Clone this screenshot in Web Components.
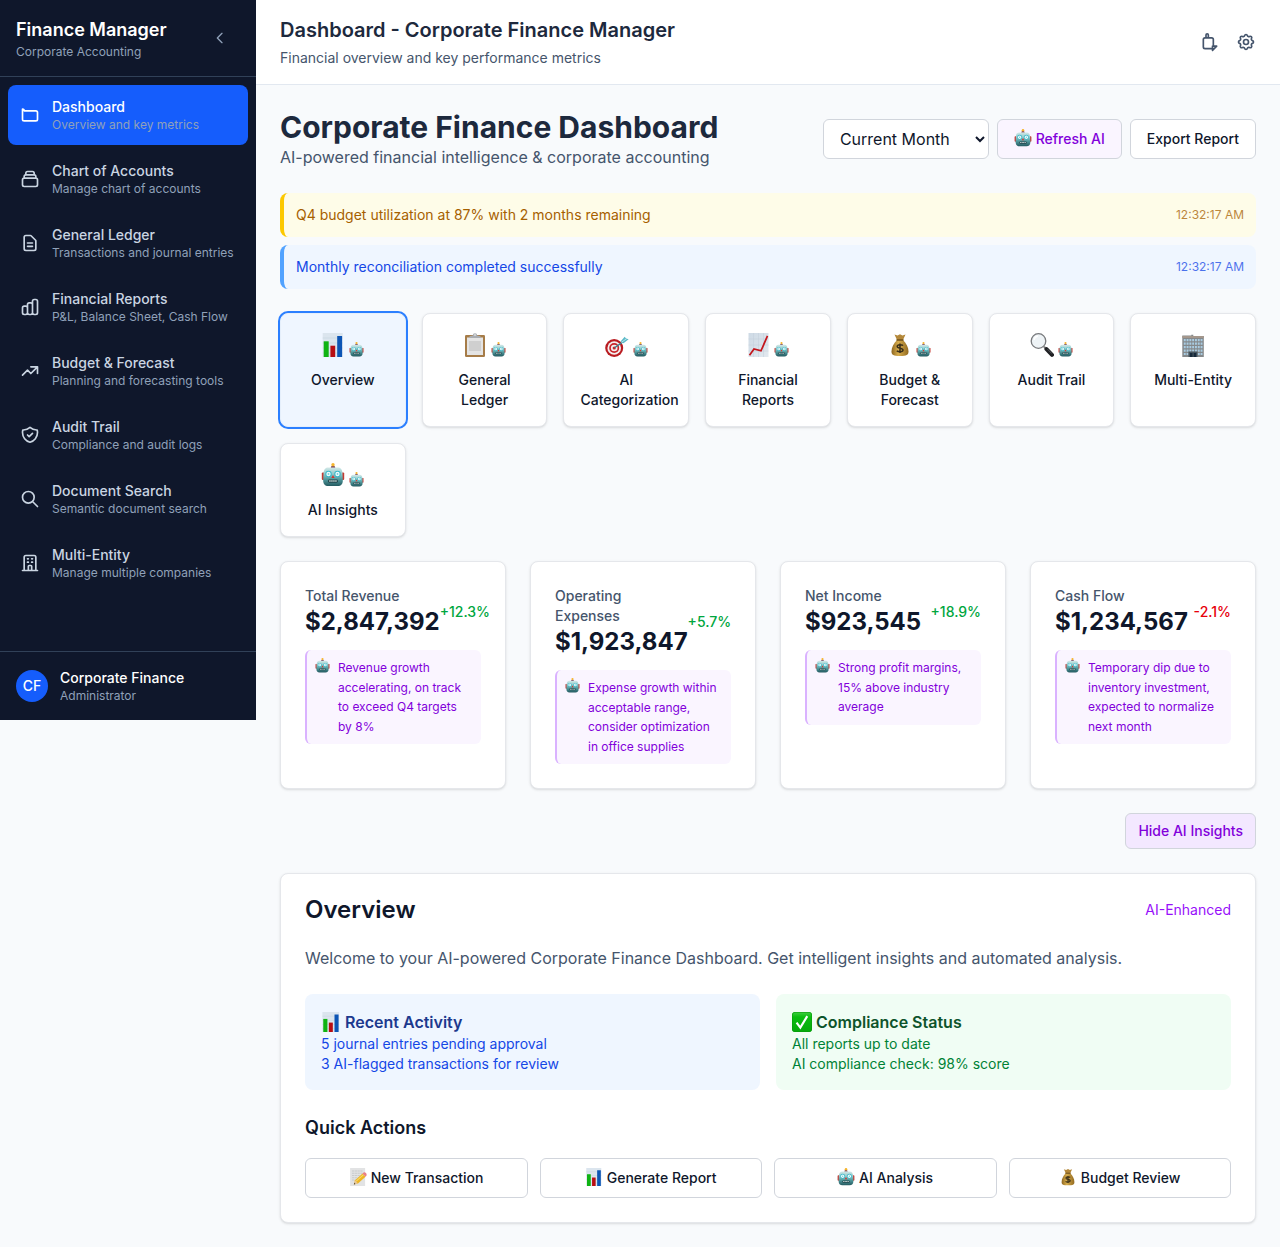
<!DOCTYPE html>
<html lang="en">
<head>
<meta charset="utf-8">
<meta name="viewport" content="width=device-width, initial-scale=1">
<title>Dashboard - Corporate Finance Manager</title>
<style>
  body {
    margin: 0;
    background: #f8fafc;
    color: #0f172b;
    font: 400 14px/20px Inter, "Noto Sans", sans-serif;
  }
</style>
</head>
<body>
<finance-app></finance-app>

<script>
const define = (name, html, setup) => {
  const template = document.createElement('template');
  template.innerHTML = html;
  customElements.define(name, class extends HTMLElement {
    constructor() {
      super();
      this.attachShadow({ mode: 'open' }).append(template.content.cloneNode(true));
    }
    connectedCallback() {
      if (setup) setup(this, this.shadowRoot);
    }
  });
};

const ICONS = {
  folder: 'M3 7v10a2 2 0 002 2h14a2 2 0 002-2V9a2 2 0 00-2-2H5a2 2 0 00-2-2z',
  collection: 'M19 11H5m14 0a2 2 0 012 2v6a2 2 0 01-2 2H5a2 2 0 01-2-2v-6a2 2 0 012-2m14 0V9a2 2 0 00-2-2M5 11V9a2 2 0 012-2m0 0V5a2 2 0 012-2h6a2 2 0 012 2v2M7 7h10',
  document: 'M9 12h6m-6 4h6m2 5H7a2 2 0 01-2-2V5a2 2 0 012-2h5.586a1 1 0 01.707.293l5.414 5.414a1 1 0 01.293.707V19a2 2 0 01-2 2z',
  bars: 'M9 19v-6a2 2 0 00-2-2H5a2 2 0 00-2 2v6a2 2 0 002 2h2a2 2 0 002-2zm0 0V9a2 2 0 012-2h2a2 2 0 012 2v10m-6 0a2 2 0 002 2h2a2 2 0 002-2m0 0V5a2 2 0 012-2h2a2 2 0 012 2v14a2 2 0 01-2 2h-2a2 2 0 01-2-2z',
  trend: 'M13 7h8m0 0v8m0-8l-8 8-4-4-6 6',
  shield: 'M9 12l2 2 4-4m5.618-4.016A11.955 11.955 0 0112 2.944a11.955 11.955 0 01-8.618 3.04A12.02 12.02 0 003 9c0 5.591 3.824 10.29 9 11.622 5.176-1.332 9-6.03 9-11.622 0-1.042-.133-2.052-.382-3.016z',
  search: 'M21 21l-6-6m2-5a7 7 0 11-14 0 7 7 0 0114 0z',
  building: 'M19 21V5a2 2 0 00-2-2H7a2 2 0 00-2 2v16m14 0h2m-2 0h-5m-9 0H3m2 0h5M9 7h1m-1 4h1m4-4h1m-1 4h1m-5 10v-5a1 1 0 011-1h2a1 1 0 011 1v5m-4 0h4',
  back: 'M15 19l-7-7 7-7',
  notify: 'M15 17h5l-5 5v-5zM14 20H6a2 2 0 01-2-2V9a2 2 0 012-2h8a2 2 0 012 2v8M7.2 7V3.500a1.400 1.400 0 012.800 0V7',
  cog: 'M10.325 4.317c.426-1.756 2.924-1.756 3.35 0a1.724 1.724 0 002.573 1.066c1.543-.94 3.31.826 2.37 2.37a1.724 1.724 0 001.065 2.572c1.756.426 1.756 2.924 0 3.35a1.724 1.724 0 00-1.066 2.573c.94 1.543-.826 3.31-2.37 2.37a1.724 1.724 0 00-2.572 1.065c-.426 1.756-2.924 1.756-3.35 0a1.724 1.724 0 00-2.573-1.066c-1.543.94-3.31-.826-2.37-2.37a1.724 1.724 0 00-1.065-2.572c-1.756-.426-1.756-2.924 0-3.35a1.724 1.724 0 001.066-2.573c-.94-1.543.826-3.31 2.37-2.37.996.608 2.296.07 2.572-1.065zM15 12a3 3 0 11-6 0 3 3 0 016 0z'
};

define('ui-icon', `
<style>
  :host { display: block; flex: none; width: 20px; height: 20px; }
  :host([small]) { width: 16px; height: 16px; }
  svg { display: block; width: 100%; height: 100%; }
</style>
<svg viewBox="0 0 24 24" fill="none" stroke="currentColor" stroke-width="2" stroke-linecap="round" stroke-linejoin="round" aria-hidden="true"><path/></svg>
`, (host, root) => root.querySelector('path').setAttribute('d', ICONS[host.getAttribute('name')]));

// Full-colour pictograms, each on a 24 by 24 grid.
const PICTURES = {
  robot: `
    <defs><linearGradient id="g" x1="0" y1="0" x2="0" y2="1"><stop offset="0" stop-color="#d3e9e8"/><stop offset=".35" stop-color="#8fc9cb"/><stop offset=".65" stop-color="#4f979b"/><stop offset="1" stop-color="#245a60"/></linearGradient></defs>
    <rect x=".8" y="9.500" width="3" height="7.500" rx="1" fill="#c33a32"/><rect x="20.200" y="9.500" width="3" height="7.500" rx="1" fill="#c33a32"/>
    <path d="M9.800 5c0-1.500.8-2.300 2.200-2.300s2.200.8 2.200 2.300z" fill="#6d3a55"/><circle cx="12" cy="1.700" r="1.700" fill="#f5b52e"/>
    <path d="M7 4.500h10c3 0 4.300 2.500 4.500 6l.3 7c.1 3.500-1.800 5.500-5 5.500H7.200c-3.200 0-5.100-2-5-5.500l.3-7c.2-3.500 1.500-6 4.500-6z" fill="url(#g)"/>
    <circle cx="7.500" cy="11" r="3.200" fill="#39b8c9"/><circle cx="16.500" cy="11" r="3.200" fill="#39b8c9"/>
    <circle cx="7.500" cy="11" r="2.200" fill="#eefcfd"/><circle cx="16.500" cy="11" r="2.200" fill="#eefcfd"/>
    <circle cx="7.500" cy="11" r=".9" fill="#7ccbd4"/><circle cx="16.500" cy="11" r=".9" fill="#7ccbd4"/>
    <path d="M12 12l1.600 2.900h-3.200z" fill="#d8322c"/>
    <rect x="7" y="16.500" width="10" height="3.200" rx="1.400" fill="#24474c"/><path d="M8.300 18h7.600" stroke="#d5e4e3" stroke-width="1.600" stroke-dasharray="1.300 .7"/>`,
  bars: `
    <path d="M1.700 0h20v24h-20z" fill="#dbe5ee"/><path d="M1.700 5h20M1.700 10h20M1.700 15h20M1.700 20h20" stroke="#c6d3df" stroke-width=".6"/>
    <path d="M2.700 8.300h5V24h-5z" fill="#0fb313"/><path d="M9.400 12.700h4.800V24H9.400z" fill="#b80d12"/><path d="M16.200 3h4.900v21h-4.900z" fill="#0c55b5"/>`,
  clipboard: `
    <rect x="2" y="2" width="20" height="22" rx="1.200" fill="#a67c48"/><path d="M4 4.500h16V22H4z" fill="#e4e4e4"/><path d="M6 8h12v10H6z" fill="#cfcfcf"/>
    <path d="M6.500 5V3.300l3.300-.8a2.200 2.200 0 014.400 0l3.300.8V5z" fill="#a9adb1"/><circle cx="12" cy="2" r=".8" fill="#f8fafc"/>`,
  target: `
    <circle cx="9.200" cy="15" r="9" fill="#b91b20"/><circle cx="9.200" cy="15" r="6.800" fill="#f4efef"/><circle cx="9.200" cy="15" r="5" fill="#c8252a"/><circle cx="9.200" cy="15" r="3.300" fill="#f4efef"/><circle cx="9.200" cy="15" r="1.600" fill="#c8252a"/>
    <path d="M9.500 14.800l8-5.600" stroke="#397f8b" stroke-width="1.400"/><path d="M15.500 8.500l4.200-4.800 1.300 1.800 2.700.8-5.200 4z" fill="#5cbac8"/><path d="M16.500 9.300l5.600-4" stroke="#b8e4e8"/>`,
  chart: `
    <defs><linearGradient id="g" x1="0" y1="0" x2="1" y2="1"><stop offset="0" stop-color="#cedae5"/><stop offset="1" stop-color="#e2e9ef"/></linearGradient></defs>
    <path d="M2.500 0h20v24h-20z" fill="url(#g)"/><path d="M2.500 6h20M2.500 12h20M2.500 18h20M7.500 0v24M12.500 0v24M17.500 0v24" stroke="#c2cfdb" stroke-width=".5"/>
    <path d="M3.500 22.200l4.500-6.200 7 1.800 6.500-15" fill="none" stroke="#c4161c" stroke-width="1.700"/>`,
  money: `
    <defs><linearGradient id="g"><stop offset="0" stop-color="#8e661f"/><stop offset=".4" stop-color="#d7ad4d"/><stop offset="1" stop-color="#936a20"/></linearGradient></defs>
    <path d="M6.500 1.500l3 1 2.500-1.300 2.500 1.300 3-1L15 7H9z" fill="#b4883a"/>
    <path d="M9 7h6c3 3 5.500 7 5.500 11.500 0 3.500-2 4.500-8.500 4.500s-8.500-1-8.500-4.500C3.500 14 6 10 9 7z" fill="url(#g)"/><path d="M8.500 7h7" stroke="#725019" stroke-width="1.500"/>
    <path d="M15 12.600c-.8-1-5.800-1.500-5.800.8 0 2.400 5.800 1.200 5.800 3.700 0 2.300-5 2-6.200.6M12 10.500v9.500" fill="none" stroke="#382d18" stroke-width="1.500"/>`,
  lens: `
    <path d="M14 13.700l3 3" stroke="#777" stroke-width="2"/><path d="M16.500 16.200l5.500 5.600" stroke="#202124" stroke-width="4" stroke-linecap="round"/><path d="M17.500 16.200l4.300 4.300" stroke="#65686c" stroke-width=".8"/>
    <circle cx="8.500" cy="8" r="7.300" fill="#eef3f6" stroke="#77797c" stroke-width="1.300"/><path d="M4 7a5 5 0 014-4" fill="none" stroke="#fff" stroke-width="1.300"/>`,
  office: `
    <path d="M1.300 2.500h9v-.7h2V3h10.500v21H1.300z" fill="#85898b"/><path d="M1.300 3h21.500v2H1.300z" fill="#a4978c"/>
    <path d="M2.800 7.200h18.800M2.800 10.700h18.800M2.800 14.200h18.800M2.800 17.700h18.800M2.800 21h4.600M16.800 21h4.800" stroke="#a9cce2" stroke-width="2.200" stroke-dasharray="1.900 .9"/>
    <path d="M7.500 18.500h9V24h-9z" fill="#45545e"/><path d="M9 20h2.500v4H9zM12.700 20h2.500v4h-2.500z" fill="#172a3b"/>`,
  check: `
    <defs><linearGradient id="g" x1="0" y1="0" x2="0" y2="1"><stop offset="0" stop-color="#42cf42"/><stop offset=".25" stop-color="#0bbd10"/><stop offset="1" stop-color="#06a90c"/></linearGradient></defs>
    <rect width="24" height="24" rx="3.500" fill="url(#g)"/><rect x=".4" y=".4" width="23.200" height="23.200" rx="3.200" fill="none" stroke="#079a0c" stroke-width=".8"/>
    <path d="M5.500 12.800l4.500 6L18.300 5" fill="none" stroke="#fff" stroke-width="2.600"/>`,
  memo: `
    <path d="M1.500 0h20v24h-20z" fill="#e2e3e4"/><path d="M4 4h14M4 7h14M4 10h11M4 13h8M4 16h6" stroke="#b9bcbe" stroke-width=".8" stroke-dasharray="3 .7"/>
    <path d="M6.500 22l1.600-5.700L18 7.300l4 4.200-10 9z" fill="#edb524"/><path d="M9.600 17.600L19.500 8.900" stroke="#f9da65" stroke-width="1.500"/><path d="M18 7.300l1.500-1.400c2-1.200 5 2 3.700 4.300L22 11.500z" fill="#e98085"/><path d="M6.500 22l1.600-5.700 3.900 4.200z" fill="#e6c79a"/><path d="M6.500 22l.6-2.200 1.500 1.600z" fill="#3b3732"/>`
};

define('ui-picture', `
<style>
  :host { display: inline-block; flex: none; width: 18px; height: 18px; vertical-align: -3px; }
  :host([size="small"]) { width: 15px; height: 15px; }
  :host([size="title"]) { width: 20px; height: 20px; vertical-align: -4px; }
  :host([size="large"]) { width: 24px; height: 24px; }
  svg { display: block; width: 100%; height: 100%; }
</style>
<svg viewBox="0 0 24 24" aria-hidden="true"></svg>
`, (host, root) => { root.querySelector('svg').innerHTML = PICTURES[host.getAttribute('name')]; });

define('nav-item', `
<style>
  :host { display: block; }
  a { display: flex; align-items: center; gap: 12px; padding: 12px; border-radius: 8px; color: #cad5e2; text-decoration: none; }
  :host([active]) a { background: #155dfc; color: #fff; }
  .name { display: block; font-weight: 500; }
  .note { display: block; font-size: 12px; line-height: 16px; color: #90a1b9; }
</style>
<a href="#"><slot name="icon"></slot><span><span class="name"><slot></slot></span><span class="note"><slot name="note"></slot></span></span></a>
`, (host, root) => {
  if (host.hasAttribute('active')) root.querySelector('a').setAttribute('aria-current', 'page');
});

define('app-sidebar', `
<style>
  :host { display: flex; flex-direction: column; flex: none; align-self: flex-start; box-sizing: border-box; width: 256px; min-height: 720px; background: #0f172b; color: #fff; }
  header { display: flex; align-items: center; justify-content: space-between; padding: 16px; border-bottom: 1px solid #314158; }
  h2 { margin: 0; font-size: 18px; line-height: 28px; font-weight: 600; }
  p { margin: 0; font-size: 12px; line-height: 16px; color: #90a1b9; }
  button { padding: 12px; border: 0; border-radius: 6px; background: none; color: #90a1b9; }
  nav { display: flex; flex: 1; flex-direction: column; gap: 4px; padding: 8px; }
  footer { display: flex; align-items: center; gap: 12px; padding: 16px; border-top: 1px solid #314158; }
  .avatar { display: grid; place-items: center; width: 32px; height: 32px; border-radius: 50%; background: #155dfc; font-weight: 500; }
  .user { font-weight: 500; }
</style>
<header>
  <div><h2>Finance Manager</h2><p>Corporate Accounting</p></div>
  <button type="button" aria-label="Collapse sidebar"><ui-icon name="back" small></ui-icon></button>
</header>
<nav aria-label="Main">
  <nav-item active><ui-icon slot="icon" name="folder"></ui-icon>Dashboard<span slot="note">Overview and key metrics</span></nav-item>
  <nav-item><ui-icon slot="icon" name="collection"></ui-icon>Chart of Accounts<span slot="note">Manage chart of accounts</span></nav-item>
  <nav-item><ui-icon slot="icon" name="document"></ui-icon>General Ledger<span slot="note">Transactions and journal entries</span></nav-item>
  <nav-item><ui-icon slot="icon" name="bars"></ui-icon>Financial Reports<span slot="note">P&amp;L, Balance Sheet, Cash Flow</span></nav-item>
  <nav-item><ui-icon slot="icon" name="trend"></ui-icon>Budget &amp; Forecast<span slot="note">Planning and forecasting tools</span></nav-item>
  <nav-item><ui-icon slot="icon" name="shield"></ui-icon>Audit Trail<span slot="note">Compliance and audit logs</span></nav-item>
  <nav-item><ui-icon slot="icon" name="search"></ui-icon>Document Search<span slot="note">Semantic document search</span></nav-item>
  <nav-item><ui-icon slot="icon" name="building"></ui-icon>Multi-Entity<span slot="note">Manage multiple companies</span></nav-item>
</nav>
<footer>
  <div class="avatar">CF</div>
  <div><div class="user">Corporate Finance</div><p>Administrator</p></div>
</footer>
`);

define('app-header', `
<style>
  :host { display: flex; align-items: center; justify-content: space-between; padding: 16px 24px; background: #fff; border-bottom: 1px solid #e2e8f0; }
  h1 { margin: 0 0 4px; font-size: 20px; line-height: 28px; font-weight: 600; color: #1d293d; }
  p { margin: 0; color: #45556c; }
  .tools { display: flex; gap: 16px; color: #45556c; }
  button { padding: 0; border: 0; background: none; color: inherit; }
</style>
<div><h1>Dashboard - Corporate Finance Manager</h1><p>Financial overview and key performance metrics</p></div>
<div class="tools">
  <button type="button" aria-label="Notifications"><ui-icon name="notify"></ui-icon></button>
  <button type="button" aria-label="Settings"><ui-icon name="cog"></ui-icon></button>
</div>
`);

define('ui-button', `
<style>
  :host { display: block; }
  button { display: block; box-sizing: border-box; width: 100%; padding: 9px 16px; border: 1px solid #d1d5dc; border-radius: 6px; background: #fff; color: #0f172b; font: inherit; font-weight: 500; text-align: center; white-space: nowrap; }
  :host([tone="ai"]) button { background: #faf5ff; color: #8200db; }
  :host([tone="toggle"]) button { padding: 7px 12px; background: #f3e8ff; color: #8200db; }
</style>
<button type="button"><slot></slot></button>
`);

define('page-intro', `
<style>
  :host { display: flex; align-items: center; justify-content: space-between; }
  h2 { margin: 0; font-size: 30px; line-height: 36px; font-weight: 700; color: #1d293d; }
  p { margin: 0; font-size: 16px; line-height: 24px; color: #45556c; }
  .controls { display: flex; gap: 8px; }
  select { box-sizing: border-box; height: 40px; padding: 0 12px; border: 1px solid #d1d5dc; border-radius: 6px; background: #fff; color: #0f172b; font: inherit; font-size: 16px; }
</style>
<div><h2>Corporate Finance Dashboard</h2><p>AI-powered financial intelligence &amp; corporate accounting</p></div>
<div class="controls">
  <select aria-label="Reporting period"><option>Current Month</option><option>Current Quarter</option><option>Current Year</option></select>
  <ui-button tone="ai"><ui-picture name="robot"></ui-picture> Refresh AI</ui-button>
  <ui-button>Export Report</ui-button>
</div>
`);

define('alert-bar', `
<style>
  :host { display: flex; align-items: center; justify-content: space-between; padding: 12px; border-left: 4px solid #51a2ff; border-radius: 8px; background: #eff6ff; color: #1447e6; }
  :host([warning]) { border-color: #fcc800; background: #fefce8; color: #a65f00; }
  time { font-size: 12px; line-height: 16px; opacity: .75; }
</style>
<span><slot></slot></span><time>12:32:17 AM</time>
`);

define('feature-tab', `
<style>
  :host { display: grid; }
  button { display: flex; flex-direction: column; align-items: center; gap: 8px; box-sizing: border-box; min-width: 0; padding: 16px; border: 1px solid #e5e7eb; border-radius: 8px; background: #fff; color: #0f172b; font: inherit; font-weight: 500; box-shadow: 0 1px 3px #0000001a, 0 1px 2px -1px #0000001a; }
  :host([active]) button { border-color: #e5effb; background: #eff6ff; box-shadow: 0 0 0 2px #2b7fff; }
  .icon { display: flex; align-items: flex-end; gap: 4px; box-sizing: border-box; height: 32px; padding-bottom: 5px; }
  :host([plain]) .ai { display: none; }
  .name { width: 100%; text-align: center; }
</style>
<button type="button"><span class="icon"><slot name="icon"></slot><ui-picture class="ai" name="robot" size="small"></ui-picture></span><span class="name"><slot></slot></span></button>
`);

define('stat-card', `
<style>
  :host { display: block; min-width: 0; padding: 24px; border: 1px solid #e5e7eb; border-radius: 8px; background: #fff; box-shadow: 0 1px 3px #0000001a, 0 1px 2px -1px #0000001a; }
  .row { display: flex; align-items: center; justify-content: space-between; }
  .label { color: #45556c; font-weight: 500; }
  .value { font-size: 24px; line-height: 32px; font-weight: 700; }
  .delta { color: #00a63e; font-weight: 500; }
  :host([down]) .delta { color: #e7000b; }
  .insight { display: flex; align-items: flex-start; gap: 8px; margin-top: 12px; padding: 8px; border-left: 2px solid #dab2ff; border-radius: 6px; background: #faf5ff; color: #8200db; font-size: 12px; }
  .text { line-height: 1.625; }
</style>
<div class="row">
  <div><div class="label"><slot name="label"></slot></div><div class="value"><slot name="value"></slot></div></div>
  <div class="delta"><slot name="delta"></slot></div>
</div>
<div class="insight"><ui-picture name="robot" size="small"></ui-picture><span class="text"><slot></slot></span></div>
`);

define('note-box', `
<style>
  :host { display: block; padding: 16px; border-radius: 8px; background: #eff6ff; color: #1447e6; }
  h4 { margin: 0; font-size: 16px; line-height: 24px; font-weight: 600; color: #1c398e; }
  :host([tone="green"]) { background: #f0fdf4; color: #008236; }
  :host([tone="green"]) h4 { color: #0d542b; }
</style>
<h4><slot name="title"></slot></h4><slot></slot>
`);

define('overview-panel', `
<style>
  :host { display: block; padding: 24px; border: 1px solid #e5e7eb; border-radius: 8px; background: #fff; box-shadow: 0 1px 3px #0000001a, 0 1px 2px -1px #0000001a; }
  header { display: flex; align-items: center; justify-content: space-between; }
  h2 { margin: 0; font-size: 24px; line-height: 24px; font-weight: 600; }
  .badge { color: #9810fa; }
  .lead { margin: 24px 0; font-size: 16px; line-height: 24px; color: #45556c; }
  .notes { display: grid; grid-template-columns: repeat(2, 1fr); gap: 16px; }
  h3 { margin: 24px 0 16px; font-size: 18px; line-height: 28px; font-weight: 600; }
  .actions { display: grid; grid-template-columns: repeat(4, 1fr); gap: 12px; }
</style>
<header><h2>Overview</h2><span class="badge">AI-Enhanced</span></header>
<p class="lead">Welcome to your AI-powered Corporate Finance Dashboard. Get intelligent insights and automated analysis.</p>
<div class="notes">
  <note-box><span slot="title"><ui-picture name="bars" size="title"></ui-picture> Recent Activity</span><div>5 journal entries pending approval</div><div>3 AI-flagged transactions for review</div></note-box>
  <note-box tone="green"><span slot="title"><ui-picture name="check" size="title"></ui-picture> Compliance Status</span><div>All reports up to date</div><div>AI compliance check: 98% score</div></note-box>
</div>
<h3>Quick Actions</h3>
<div class="actions">
  <ui-button><ui-picture name="memo"></ui-picture> New Transaction</ui-button>
  <ui-button><ui-picture name="bars"></ui-picture> Generate Report</ui-button>
  <ui-button><ui-picture name="robot"></ui-picture> AI Analysis</ui-button>
  <ui-button><ui-picture name="money"></ui-picture> Budget Review</ui-button>
</div>
`);

define('finance-app', `
<style>
  :host { display: flex; }
  .content { flex: 1; min-width: 0; }
  main { display: flex; flex-direction: column; gap: 24px; padding: 24px; }
  .alerts { display: grid; gap: 8px; }
  .tabs { display: grid; grid-template-columns: repeat(7, minmax(0, 1fr)); gap: 16px; }
  .stats { display: grid; grid-template-columns: repeat(4, minmax(0, 1fr)); gap: 24px; }
  .toggle { display: flex; justify-content: flex-end; }
</style>
<app-sidebar></app-sidebar>
<div class="content">
  <app-header></app-header>
  <main>
    <page-intro></page-intro>
    <div class="alerts">
      <alert-bar warning>Q4 budget utilization at 87% with 2 months remaining</alert-bar>
      <alert-bar>Monthly reconciliation completed successfully</alert-bar>
    </div>
    <div class="tabs">
      <feature-tab active><ui-picture slot="icon" size="large" name="bars"></ui-picture>Overview</feature-tab>
      <feature-tab><ui-picture slot="icon" size="large" name="clipboard"></ui-picture>General Ledger</feature-tab>
      <feature-tab><ui-picture slot="icon" size="large" name="target"></ui-picture>AI Categorization</feature-tab>
      <feature-tab><ui-picture slot="icon" size="large" name="chart"></ui-picture>Financial Reports</feature-tab>
      <feature-tab><ui-picture slot="icon" size="large" name="money"></ui-picture>Budget &amp; Forecast</feature-tab>
      <feature-tab><ui-picture slot="icon" size="large" name="lens"></ui-picture>Audit Trail</feature-tab>
      <feature-tab plain><ui-picture slot="icon" size="large" name="office"></ui-picture>Multi-Entity</feature-tab>
      <feature-tab><ui-picture slot="icon" size="large" name="robot"></ui-picture>AI Insights</feature-tab>
    </div>
    <div class="stats">
      <stat-card><span slot="label">Total Revenue</span><span slot="value">$2,847,392</span><span slot="delta">+12.3%</span>Revenue growth accelerating, on track to exceed Q4 targets by 8%</stat-card>
      <stat-card><span slot="label">Operating Expenses</span><span slot="value">$1,923,847</span><span slot="delta">+5.7%</span>Expense growth within acceptable range, consider optimization in office supplies</stat-card>
      <stat-card><span slot="label">Net Income</span><span slot="value">$923,545</span><span slot="delta">+18.9%</span>Strong profit margins, 15% above industry average</stat-card>
      <stat-card down><span slot="label">Cash Flow</span><span slot="value">$1,234,567</span><span slot="delta">-2.1%</span>Temporary dip due to inventory investment, expected to normalize next month</stat-card>
    </div>
    <div class="toggle"><ui-button tone="toggle">Hide AI Insights</ui-button></div>
    <overview-panel></overview-panel>
  </main>
</div>
`);
</script>
</body>
</html>
